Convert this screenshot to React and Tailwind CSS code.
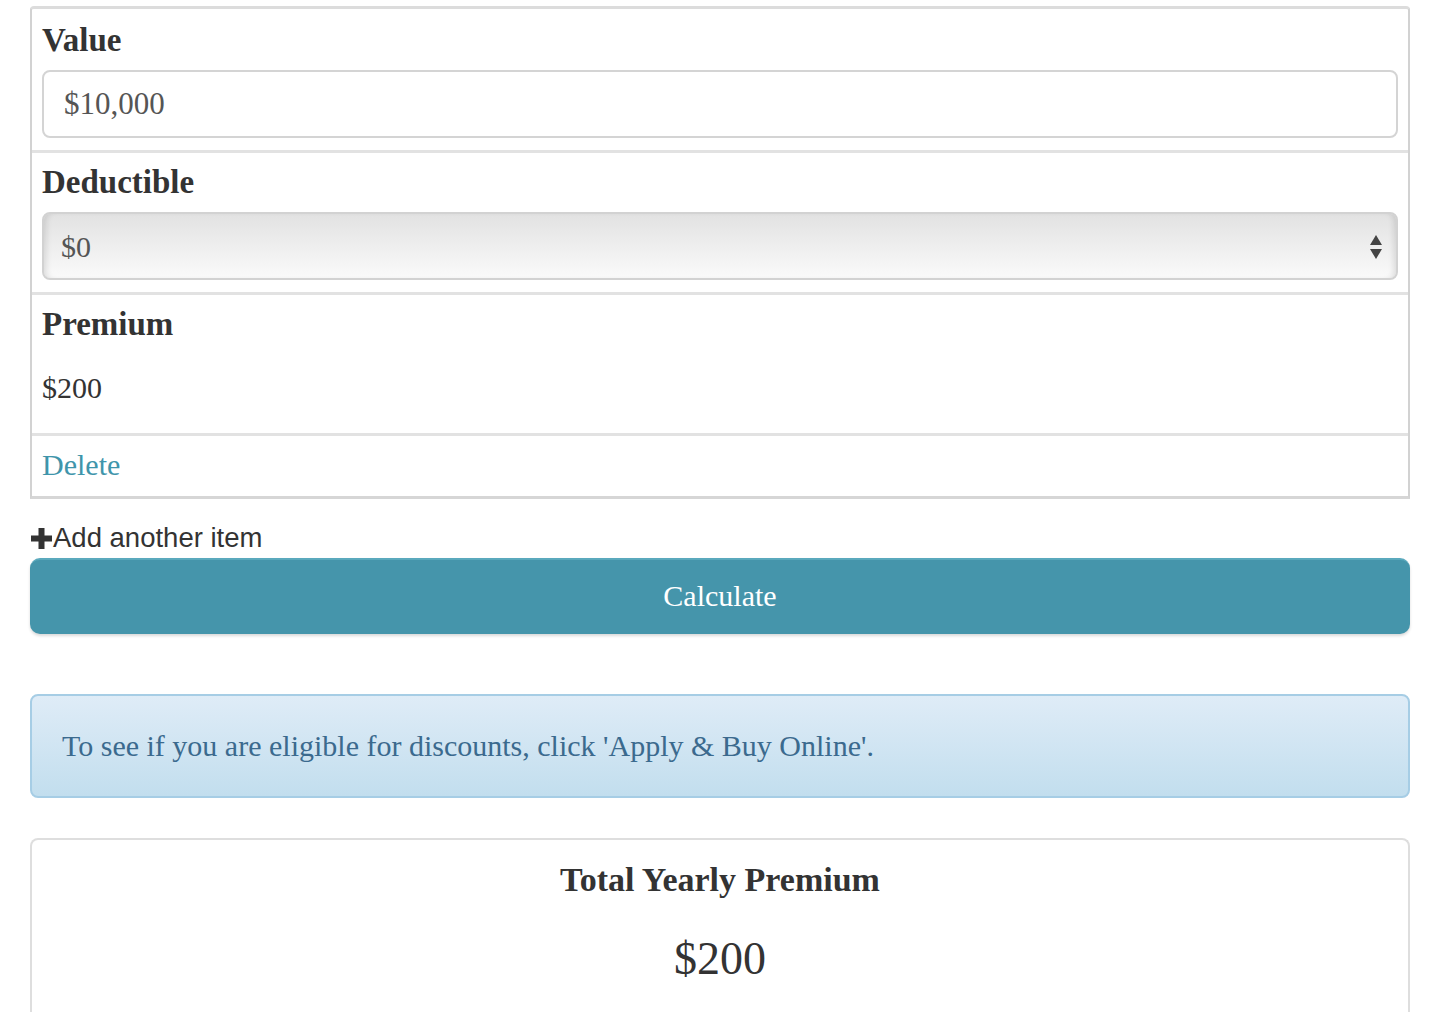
import React, { useState } from 'react';

const serif = { fontFamily: '"Liberation Serif", "DejaVu Serif", Georgia, serif' };
const sans = { fontFamily: '"Liberation Sans", Arial, sans-serif' };

const PlusIcon = () => (
  <svg width="23" height="23" viewBox="0 0 23 23" className="shrink-0">
    <path d="M8.5 1h6v7.5H22v6h-7.5V22h-6v-7.5H1v-6h7.5z" fill="#333" />
  </svg>
);

const Arrows = () => (
  <svg width="14" height="26" viewBox="0 0 14 26">
    <path d="M7 1L13 11H1z" fill="#444" />
    <path d="M1 15H13L7 25z" fill="#444" />
  </svg>
);

const App = () => {
  const [value, setValue] = useState('$10,000');
  const [deductible, setDeductible] = useState('$0');

  return (
    <div className="min-h-screen bg-white pl-[30px] pr-[22px] pt-[6px] text-[#333]" style={serif}>
      {/* Item list */}
      <div className="rounded-t-[4px] border-x-2 border-t-[3px] border-b-[3px] border-x-[#d2d2d2] border-t-[#dcdcdc] border-b-[#d6d6d6] bg-white">
        {/* Value */}
        <div className="px-[10px] pt-[11px] pb-[12px]">
          <label className="block h-[40px] text-[33px] font-bold leading-[40px] text-[#333]">Value</label>
          <div className="mt-[10px]">
            <input
              type="text"
              value={value}
              onChange={(e) => setValue(e.target.value)}
              className="h-[68px] w-full rounded-[8px] border-2 border-[#d4d4d4] bg-white px-[20px] text-[31px] text-[#555] outline-none"
              style={serif}
            />
          </div>
        </div>

        {/* Deductible */}
        <div className="border-t-[3px] border-[#e2e2e2] px-[10px] pt-[9px] pb-[12px]">
          <label className="block h-[40px] text-[33px] font-bold leading-[40px] text-[#333]">Deductible</label>
          <div className="relative mt-[10px] h-[68px] rounded-[8px] border-2 border-[#d2d2d2] bg-gradient-to-b from-[#e2e2e2] to-[#fafafa] shadow-[inset_6px_0_6px_-4px_rgba(0,0,0,0.12),inset_-6px_0_6px_-4px_rgba(0,0,0,0.12)]">
            <select
              value={deductible}
              onChange={(e) => setDeductible(e.target.value)}
              className="h-full w-full appearance-none bg-transparent px-[17px] text-[30px] text-[#555] outline-none"
              style={serif}
            >
              <option>$0</option>
              <option>$250</option>
              <option>$500</option>
            </select>
            <div className="pointer-events-none absolute right-[13px] top-[20px]">
              <Arrows />
            </div>
          </div>
        </div>

        {/* Premium */}
        <div className="border-t-[3px] border-[#e2e2e2] px-[10px] pt-[9px] pb-[25px]">
          <div className="h-[40px] text-[33px] font-bold leading-[40px] text-[#333]">Premium</div>
          <div className="mt-[24px] h-[40px] text-[30px] leading-[40px] text-[#333]">$200</div>
        </div>

        {/* Delete */}
        <div className="border-t-[3px] border-[#e2e2e2] px-[10px] pt-[9px] pb-[11px]">
          <a href="#" className="block h-[40px] text-[30px] leading-[40px] text-[#3f95ab]">Delete</a>
        </div>
      </div>

      {/* Add another */}
      <div className="mt-[23px] flex h-[32px] items-center text-[27.5px] leading-[32px] text-[#333]" style={sans}>
        <PlusIcon />
        <span>Add another item</span>
      </div>

      {/* Calculate */}
      <button
        className="mt-[4px] h-[76px] w-full rounded-[10px] border-t-2 border-[#5aa9bd] bg-[#4595ab] pb-[4px] text-[30px] text-white shadow-[0_2px_3px_rgba(0,0,0,0.15)]"
        style={serif}
      >
        Calculate
      </button>

      {/* Info */}
      <div className="mt-[60px] flex h-[104px] items-center rounded-[8px] border-2 border-[#a6cde5] bg-gradient-to-b from-[#dfecf7] to-[#c2deee] px-[30px] pb-[2px] text-[30px] text-[#3b6a8e]">
        To see if you are eligible for discounts, click 'Apply &amp; Buy Online'.
      </div>

      {/* Total */}
      <div className="mt-[40px] h-[200px] rounded-t-[8px] border-x-2 border-t-2 border-[#dedede] bg-white pt-[18px] text-center">
        <div className="h-[44px] text-[34px] font-bold leading-[44px] text-[#333]">Total Yearly Premium</div>
        <div className="mt-[31px] h-[52px] text-[46px] leading-[52px] text-[#333]">$200</div>
      </div>
    </div>
  );
};

export default App;
